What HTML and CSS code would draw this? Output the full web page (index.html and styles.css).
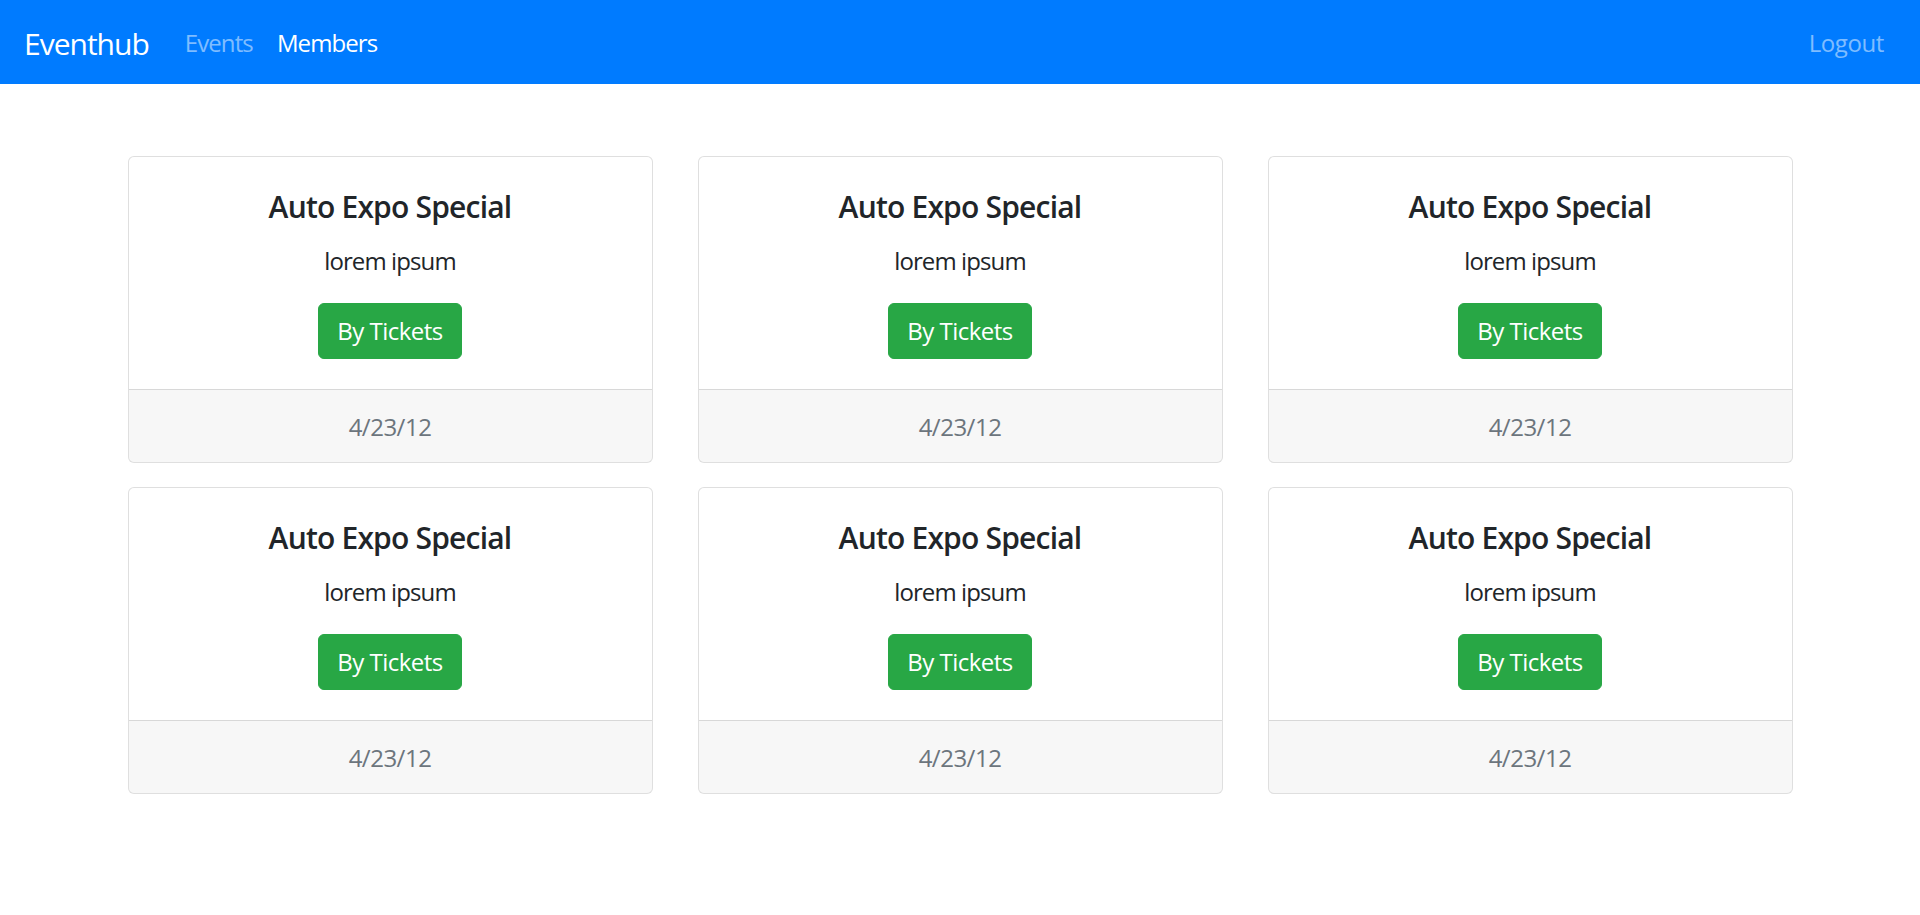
FILE: index.html
```html
<!DOCTYPE html>
<html lang="en">
<head>
<meta charset="utf-8">
<title>Eventhub</title>
<link rel="stylesheet" href="styles.css">
</head>
<body>
<nav class="navbar">
  <a class="brand" href="#">Eventhub</a>
  <ul class="nav">
    <li><a class="nav-link" href="#">Events</a></li>
    <li><a class="nav-link active" href="#">Members</a></li>
  </ul>
  <ul class="nav nav-right">
    <li><a class="nav-link nav-logout" href="#">Logout</a></li>
  </ul>
</nav>
<main class="container">
  <div class="grid">
    <div class="card">
      <div class="card-body">
        <h5 class="card-title">Auto Expo Special</h5>
        <p class="card-text">lorem ipsum</p>
        <a class="btn" href="#">By Tickets</a>
      </div>
      <div class="card-footer">4/23/12</div>
    </div>
    <div class="card">
      <div class="card-body">
        <h5 class="card-title">Auto Expo Special</h5>
        <p class="card-text">lorem ipsum</p>
        <a class="btn" href="#">By Tickets</a>
      </div>
      <div class="card-footer">4/23/12</div>
    </div>
    <div class="card">
      <div class="card-body">
        <h5 class="card-title">Auto Expo Special</h5>
        <p class="card-text">lorem ipsum</p>
        <a class="btn" href="#">By Tickets</a>
      </div>
      <div class="card-footer">4/23/12</div>
    </div>
    <div class="card">
      <div class="card-body">
        <h5 class="card-title">Auto Expo Special</h5>
        <p class="card-text">lorem ipsum</p>
        <a class="btn" href="#">By Tickets</a>
      </div>
      <div class="card-footer">4/23/12</div>
    </div>
    <div class="card">
      <div class="card-body">
        <h5 class="card-title">Auto Expo Special</h5>
        <p class="card-text">lorem ipsum</p>
        <a class="btn" href="#">By Tickets</a>
      </div>
      <div class="card-footer">4/23/12</div>
    </div>
    <div class="card">
      <div class="card-body">
        <h5 class="card-title">Auto Expo Special</h5>
        <p class="card-text">lorem ipsum</p>
        <a class="btn" href="#">By Tickets</a>
      </div>
      <div class="card-footer">4/23/12</div>
    </div>
  </div>
</main>
</body>
</html>
```
FILE: styles.css
```css
* { box-sizing: border-box; }
html, body { margin: 0; padding: 0; }
body {
  font-family: "Segoe UI", "Open Sans", "Noto Sans", sans-serif;
  font-size: 24px;
  line-height: 1.5;
  letter-spacing: -0.5px;
  color: #212529;
  background: #fff;
}
a { text-decoration: none; }

.navbar {
  display: flex;
  align-items: center;
  background: #007bff;
  padding: 13px 24px 11px;
  height: 84px;
}
.brand {
  font-size: 30px;
  line-height: 45px;
  padding: 7.5px 0;
  margin-right: 24px;
  color: #fff;
  white-space: nowrap;
  letter-spacing: -1px;
}
.nav {
  display: flex;
  list-style: none;
  margin: 0;
  padding: 0;
}
.nav-right { margin-left: auto; }
.nav-link {
  display: block;
  padding: 12px 12px;
  color: rgba(255, 255, 255, 0.5);
  letter-spacing: -0.9px;
}
.nav-link.active { color: #fff; }
.nav-link.nav-logout { letter-spacing: -0.4px; }

.container {
  width: 1710px;
  margin: 72px auto 0;
  padding: 0 22.5px;
}
.grid {
  display: grid;
  grid-template-columns: repeat(3, 1fr);
  column-gap: 45px;
  row-gap: 24px;
}
.card {
  display: flex;
  flex-direction: column;
  border: 1px solid rgba(0, 0, 0, 0.125);
  border-radius: 6px;
  background: #fff;
  text-align: center;
  overflow: hidden;
}
.card-body {
  padding: 32px 30px 30px;
}
.card-title {
  margin: 0 0 18px;
  font-size: 30px;
  font-weight: 600;
  line-height: 1.2;
  letter-spacing: -0.8px;
}
.card-text {
  margin: 0 0 24px;
  letter-spacing: -0.9px;
}
.btn {
  display: inline-block;
  padding: 9px 18px;
  border: 1px solid #28a745;
  border-radius: 6px;
  background: #28a745;
  color: #fff;
  line-height: 36px;
}
.card-footer {
  padding: 19px 30px 17px;
  background: rgba(0, 0, 0, 0.03);
  border-top: 1px solid rgba(0, 0, 0, 0.125);
  color: #6c757d;
}
```
